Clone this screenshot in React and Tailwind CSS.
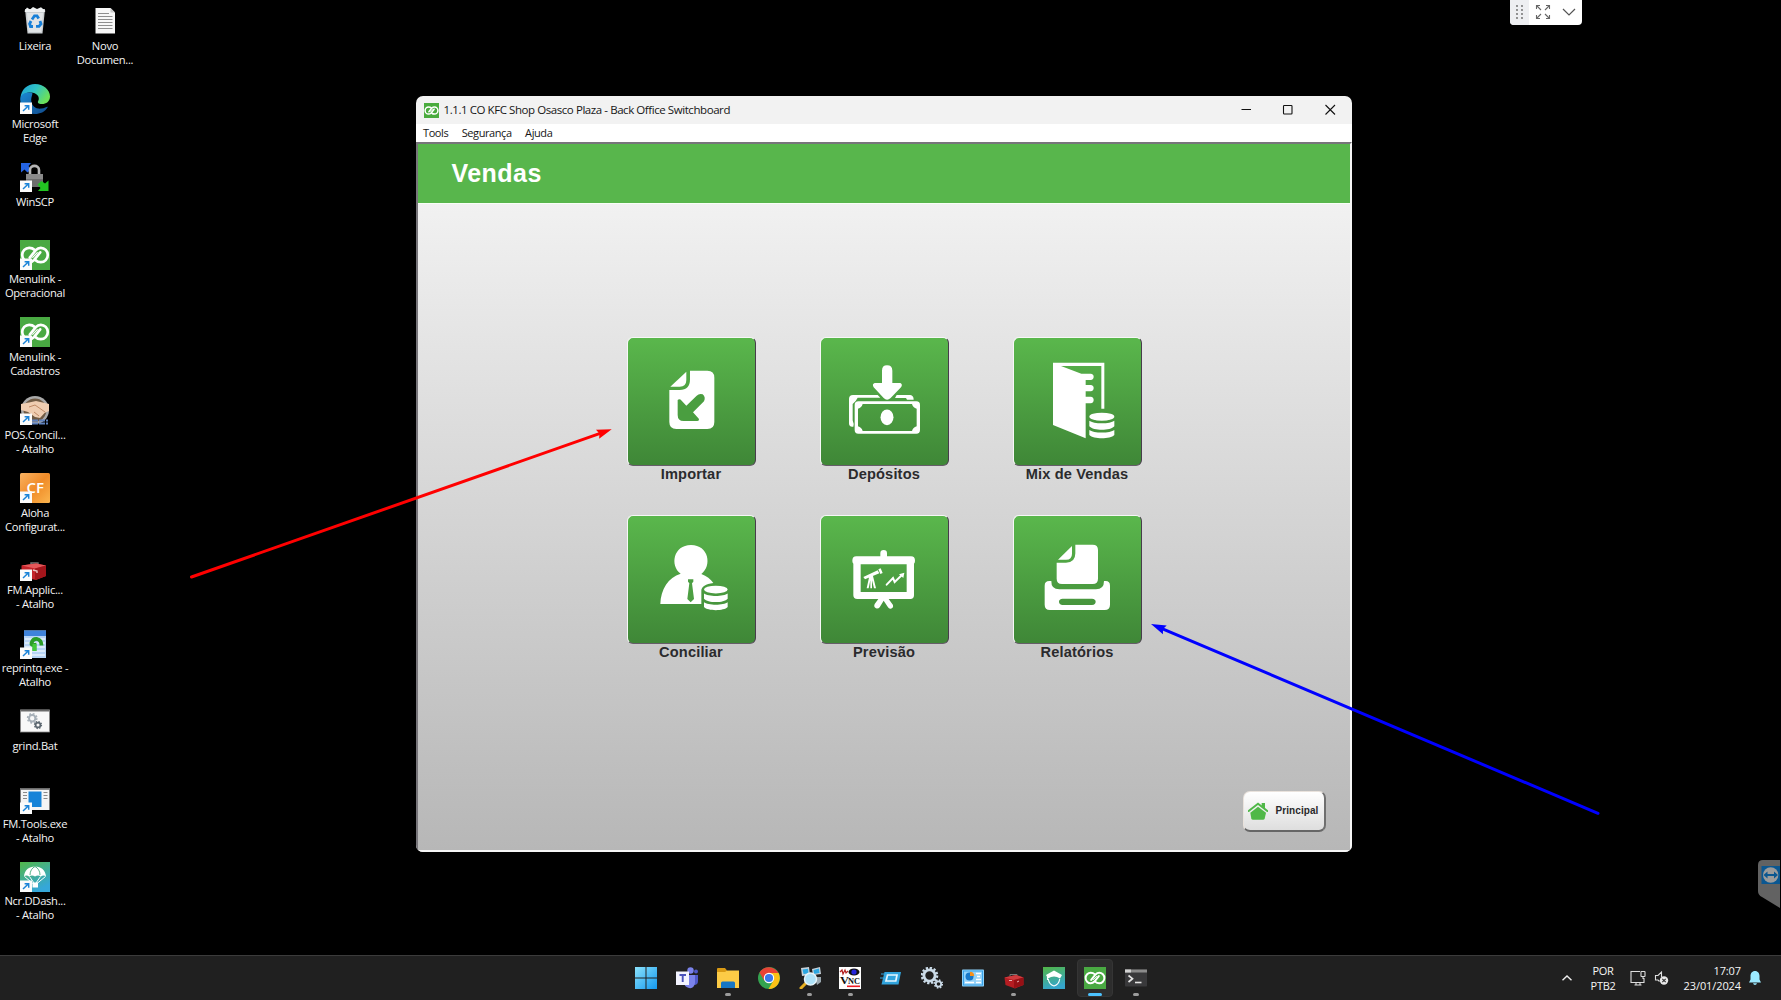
import React from "react";

const Shortcut = () => (
  <g>
    <rect x="0" y="18.500" width="12" height="11.500" fill="#fbfbfb" />
    <path d="M3 27 L8.5 21.8 M4.6 21.8 H8.7 V25.8" fill="none" stroke="#1c84d8" strokeWidth="1.5" />
  </g>
);

const Svg = ({ children, vb = "0 0 30 30", className = "w-[30px] h-[30px]" }) => (
  <svg viewBox={vb} className={className + " block shrink-0"}>{children}</svg>
);

const LinkMark = ({ w = 2.7 }) => (
  <g fill="none" stroke="#fff" strokeWidth={w} strokeLinecap="round">
    <path d="M9.800 17.600 L15.800 10.200 C17.500 8.300 19.200 7.800 20.800 7.800 A7 7.200 0 0 1 20.800 22.200 C18.300 22.200 16.800 21.500 15.600 20.300" />
    <path d="M20.200 12.400 L14.200 19.800 C12.500 21.700 10.800 22.200 9.200 22.200 A7 7.200 0 0 1 9.200 7.800 C11.700 7.800 13.200 8.500 14.400 9.700" />
    <path d="M12.700 17.300 L17.300 12.700" strokeWidth="1.200" />
  </g>
);

const icons = {
  bin: (
    <Svg>
      <path d="M5 3 L25 3 L22.5 27.5 H7.5 Z" fill="#c9cdd0" />
      <path d="M4.5 5 L7 1.5 L10 3.5 L13 1 L17 3 L21 1.3 L25.5 5 L24.5 6 H5Z" fill="#eef0f1" />
      <path d="M7 7 L23 7 L21.3 26 H8.7Z" fill="#e1e4e6" />
      <g fill="none" stroke="#167fd8" strokeWidth="2.8">
        <path d="M12 13.5 L14.5 9.8 H17 L18.7 12.6" /><path d="M20 15 L21 18 L19 20.3 H16" /><path d="M13 20.5 H10.5 L9.6 17.8 L11 15" />
      </g>
    </Svg>
  ),
  doc: (
    <Svg>
      <path d="M5.5 2 H20.5 L25 6.5 V27.5 H5.5Z" fill="#f7f7f7" />
      <path d="M20.5 2 V6.5 H25Z" fill="#c9c9c9" />
      <path d="M8 7.5 H19 M8 10.5 H22.5 M8 13.5 H22.5 M8 16.5 H22.5 M8 19.5 H22.5 M8 22.5 H22.5" stroke="#8e8e8e" strokeWidth="1" />
    </Svg>
  ),
  edge: (
    <Svg>
      <defs>
        <linearGradient id="eg1" x1="0" y1="0" x2="1" y2="0.5"><stop offset="0" stopColor="#1d9fd8" /><stop offset="0.5" stopColor="#2fc3c6" /><stop offset="1" stopColor="#6be05a" /></linearGradient>
        <linearGradient id="eg2" x1="0" y1="0" x2="1" y2="1"><stop offset="0" stopColor="#1b8ad4" /><stop offset="1" stopColor="#114a8b" /></linearGradient>
      </defs>
      <path d="M0.5 14 C1 5.5 7.5 0 15 0 C23.5 0 30 6 30 12.5 C30 17.5 26 20 22 20 C18 20 17.3 18.4 18.2 17 C20.5 13 16.5 8.5 11 8.5 C6 8.5 2 10.5 0.5 14Z" fill="url(#eg1)" />
      <path d="M0.3 14 C1.5 9.5 6 8 11 8.5 C14 9 11.2 11.5 11.2 16 C11.2 22 16.5 25.5 21.5 24.6 C25 24 27.5 22 27.8 23 C25 28 20 30 15 30 C6 30 -0.5 23 0.3 14Z" fill="url(#eg2)" />
      <Shortcut />
    </Svg>
  ),
  winscp: (
    <Svg>
      <path d="M1 1 H11 L8.5 4 L11 7.5 L7.5 10.5 L4.5 7.5 L1 10.5Z" fill="#2363e4" />
      <path d="M10 12 V8 C10 2.5 19 2.5 19 8 V12" fill="none" stroke="#b5b5b5" strokeWidth="2.6" />
      <rect x="6" y="12" width="17" height="13" rx="1.5" fill="#6d6d6d" /><rect x="6" y="12" width="17" height="5" fill="#8a8a8a" />
      <path d="M28.5 29 H18 L20.5 26 L17.5 22.5 L21.5 19 L25 21.5 L28.5 18.5Z" fill="#22c322" />
      <Shortcut />
    </Svg>
  ),
  menulink: (
    <Svg>
      <rect width="30" height="30" fill="#49a942" />
      <LinkMark /><Shortcut />
    </Svg>
  ),
  pos: (
    <Svg>
      <circle cx="15" cy="15" r="14" fill="#a9a9a9" /><circle cx="15" cy="15" r="11.5" fill="#6f5a44" />
      <path d="M1 9 L9 7.5 L16 6 L29 9 V16 L24.5 18 L20 23 L15 22 L8 17 L1 15Z" fill="#efcdb1" />
      <path d="M9 12 L15 10 L25 17 M14 17 L19 21" stroke="#c08a66" strokeWidth="1" fill="none" />
      <path d="M12 25.5 H28 M12 28.5 H28" stroke="#5f82bf" strokeWidth="2.2" strokeDasharray="6 1" />
      <Shortcut />
    </Svg>
  ),
  cf: (
    <Svg>
      <defs><linearGradient id="cfg" x1="0" y1="0" x2="1" y2="1"><stop offset="0" stopColor="#f9b262" /><stop offset="0.5" stopColor="#f08b28" /><stop offset="1" stopColor="#fbb54e" /></linearGradient></defs>
      <rect width="30" height="30" rx="1.5" fill="url(#cfg)" />
      <text x="15.300" y="20" textAnchor="middle" fontFamily="Open Sans, sans-serif" fontSize="15" fontWeight="600" fill="#fff">CF</text>
      <Shortcut />
    </Svg>
  ),
  toolbox: (
    <Svg>
      <path d="M11 14 V12 H18 V14" stroke="#777" strokeWidth="1.4" fill="none" />
      <path d="M1.5 14.5 L16 12.5 L26 14.5 V25 L16 29 L1.5 26Z" fill="#c4242a" />
      <path d="M1.5 14.5 L16 12.5 L26 14.5 L15 17.5Z" fill="#e4585a" /><path d="M15 17.5 V29 L26 25 V14.5Z" fill="#a3151b" />
      <path d="M13 19 L17 20 V22" stroke="#e9c6c6" strokeWidth="1.4" fill="none" />
      <Shortcut />
    </Svg>
  ),
  reprint: (
    <Svg>
      <rect x="4" y="1.5" width="22" height="27.5" fill="#b7d4f6" /><rect x="4" y="1.5" width="22" height="5.5" fill="#3f83da" />
      <path d="M5 10 H25 M5 14 H25 M5 18 H25 M5 22 H25 M5 26 H25" stroke="#e8f2fd" strokeWidth="1.6" />
      <path d="M14.500 22 V16 Q11 16.500 11.500 14 Q13 9.500 17 10 Q21.500 11 21.500 16.500" fill="none" stroke="#2a9d27" strokeWidth="3.800" />
      <path d="M14.500 22 V15" stroke="#43c93a" strokeWidth="4" />
      <Shortcut />
    </Svg>
  ),
  grind: (
    <Svg>
      <rect x="0.5" y="4" width="29" height="22" fill="#f8f8f8" stroke="#8a8a8a" strokeWidth="0.8" /><rect x="0.5" y="3.5" width="29" height="2" fill="#6b6b6b" />
      <circle cx="12.2" cy="12.3" r="3.2" fill="none" stroke="#a7b0b8" strokeWidth="2" /><circle cx="12.2" cy="12.3" r="4.6" fill="none" stroke="#a7b0b8" strokeWidth="1.6" strokeDasharray="1.8 1.81" />
      <circle cx="18" cy="19" r="2.4" fill="none" stroke="#5c6770" strokeWidth="1.7" /><circle cx="18" cy="19" r="3.5" fill="none" stroke="#5c6770" strokeWidth="1.3" strokeDasharray="1.4 1.35" />
    </Svg>
  ),
  fmtools: (
    <Svg>
      <rect x="0.5" y="4" width="29" height="22" fill="#f4f4f4" /><rect x="0.5" y="4" width="29" height="1.8" fill="#6b6b6b" />
      <rect x="8.5" y="7.5" width="13" height="15.5" fill="#1683d8" />
      <path d="M3 8.5 H7 M3 11.5 H7 M3 14.5 H7 M23.5 8.5 H27.5 M23.5 11.5 H27.5 M23.5 14.5 H27.5" stroke="#8a8a8a" strokeWidth="1.1" />
      <Shortcut />
    </Svg>
  ),
  ncr: (
    <Svg>
      <defs><linearGradient id="ncrg" x1="0" y1="0" x2="0.5" y2="1"><stop offset="0" stopColor="#52b748" /><stop offset="1" stopColor="#35a7d9" /></linearGradient></defs>
      <rect width="30" height="30" fill="url(#ncrg)" />
      <path d="M4 14.5 C4.5 8 9 4.5 15 4.5 C21 4.5 25.5 8 26 14.5 C24.5 13.3 22.5 13.3 21 14.6 C19 13.2 17 13.2 15 14.6 C13 13.2 11 13.2 9 14.6 C7.5 13.3 5.5 13.3 4 14.5Z" fill="#fff" />
      <path d="M10 13 C10 9 12 6 15 4.5 C18 6 20 9 20 13" fill="none" stroke="#45ad7c" strokeWidth="0.9" />
      <path d="M4.5 14.5 L13 21.5 M9.5 14.5 L14 21 M20.5 14.5 L16 21 M25.5 14.5 L17 21.5" stroke="#fff" strokeWidth="1" />
      <rect x="12.5" y="20.5" width="5.5" height="5" fill="#fff" />
      <Shortcut />
    </Svg>
  ),
};

const desktop = [
  ["bin", "Lixeira"],
  ["edge", "Microsoft", "Edge"],
  ["winscp", "WinSCP"],
  ["menulink", "Menulink -", "Operacional"],
  ["menulink", "Menulink -", "Cadastros"],
  ["pos", "POS.Concil...", "- Atalho"],
  ["cf", "Aloha", "Configurat..."],
  ["toolbox", "FM.Applic...", "- Atalho"],
  ["reprint", "reprintq.exe -", "Atalho"],
  ["grind", "grind.Bat"],
  ["fmtools", "FM.Tools.exe", "- Atalho"],
  ["ncr", "Ncr.DDash...", "- Atalho"],
];

const DesktopItem = ({ item: [icon, ...lines] }) => (
  <div className="flex h-[77.78px] w-[70px] flex-col items-center pt-[6.4px]">
    {icons[icon]}
    <div className="mt-[2.6px] text-center text-[11.2px] leading-[14px] tracking-[-0.3px] whitespace-nowrap text-[#f4f4f4]">
      {lines.map((l) => <div key={l}>{l}</div>)}
    </div>
  </div>
);

const Coins = ({ x, y, w, h }) => (
  <g transform={`translate(${x} ${y}) scale(${w / 74} ${h / 76})`} fill="#fff">
    <ellipse cx="37" cy="12" rx="37" ry="12" />
    <path d="M0 24 C12 34 62 34 74 24 V40 C62 54 12 54 0 40Z" />
    <path d="M0 51 C12 61 62 61 74 51 V66 C62 79 12 79 0 66Z" />
  </g>
);

const tiles = [
  {
    label: "Importar", vb: "53 36 384 384",
    art: (
      <>
        <path d="M239 137 H291 Q312 137 312 158 V291 Q312 312 291 312 H198 Q177 312 177 291 V195 H208 Q239 195 239 163Z" fill="#fff" />
        <path d="M180 185 L228 140 V165 Q228 185 208 185Z" fill="#fff" />
        <path d="M202 225 Q208 220 214 227 L228 242 L259 212 Q267 204 277 208 Q287 217 281 229 L248 262 L266 282 Q267 288 261 288 H220 Q202 288 202 270Z" fill="#4a9e40" />
      </>
    ),
  },
  {
    label: "Depósitos", vb: "632 36 384 384",
    art: (
      <>
        <path d="M815 137 Q815 121 830 121 Q846 121 846 137 V174 H870 Q878 178 872 187 L841 219 Q830 229 820 219 L790 187 Q784 177 793 174 H815Z" fill="#fff" />
        <path d="M716 222 Q716 210 728 210 H802 L810 218 H742 L736 228 L727 237 V286 Q732 298 729 305 Q716 307 716 295Z M859 210 H900 Q910 212 910 224 H890 L887 219 H854Z" fill="#fff" />
        <path fillRule="evenodd" d="M744 229 H918 Q929 229 929 240 V315 Q929 326 918 326 H744 Q733 326 733 315 V240 Q733 229 744 229Z M757 237 Q754 248 743 251 V304 Q754 307 757 318 H905 Q908 307 919 304 V251 Q908 248 905 237Z" fill="#fff" />
        <ellipse cx="830" cy="277" rx="19.5" ry="23.5" fill="#fff" />
      </>
    ),
  },
  {
    label: "Mix de Vendas", vb: "161 36 384 384",
    art: (
      <>
        <path d="M278 113 H432 V251 H423 V123 H302 L363 146 H391 Q400 147 400 155 Q400 164 391 165 H376 V180 H391 Q400 181 400 189 Q400 198 391 199 H376 V215 H391 Q400 216 400 225 Q400 234 391 235 H376 V340 L278 300Z" fill="#fff" />
        <Coins x={387} y={263} w={75} h={77} />
      </>
    ),
  },
  {
    label: "Conciliar", vb: "53 45 384 384",
    art: (
      <>
        <path d="M211 221 C178 197 189 135 242 135 C295 135 306 197 273 222 C289 228 301 237 309 249 C286 252 273 260 273 272 V312 H150 C151 268 174 232 211 221Z" fill="#fff" />
        <path d="M233 238 H249 V245 L245 250 L251 297 L241 307 L231 297 L237 250 L233 245Z" fill="#4c9f42" />
        <Coins x={281} y={257} w={71} h={74} />
      </>
    ),
  },
  {
    label: "Previsão", vb: "632 45 384 384",
    art: (
      <>
        <path fillRule="evenodd" d="M810 169 V160 Q810 150 820 150 Q830 150 830 160 V169 H902 Q914 169 914 182 Q914 188 911 191 V286 Q911 297 900 297 H835 L848 315 Q850 325 841 326 Q836 327 833 322 L820 302 L808 322 Q804 327 797 325 Q789 321 793 312 L804 297 H741 Q729 297 729 286 V191 Q726 188 726 182 Q726 169 738 169Z M751 193 V276 H889 V193Z" fill="#fff" />
        <path d="M759 231 L802 211 L807 220 L764 238Z M804 208 L811 205 L817 219 L810 222Z M777 228 H788 L797 265 H791 L785 241 V265 H780 V241 L775 265 H769Z" fill="#fff" />
        <path d="M829 254 L848 234 L853 246 L874 226" fill="none" stroke="#fff" strokeWidth="6" strokeLinecap="round" /><path d="M866 223 L882 218 L879 234Z" fill="#fff" />
      </>
    ),
  },
  {
    label: "Relatórios", vb: "161 45 384 384",
    art: (
      <>
        <path d="M345 134 H397 Q413 134 413 150 V236 Q413 252 397 252 H305 Q289 252 289 236 V188 H317 Q345 188 345 160Z M293 179 L335 138 V161 Q335 179 317 179Z" fill="#fff" />
        <path fillRule="evenodd" d="M253 257 Q253 243 267 243 H273 Q272 268 297 268 H407 Q431 268 431 243 H436 Q449 243 449 257 V314 Q449 330 433 330 H269 Q253 330 253 314Z M307 296 Q296 297 296 305 Q296 314 307 315 H395 Q406 314 406 305 Q406 297 395 296Z" fill="#fff" />
      </>
    ),
  },
];

const Tile = ({ t }) => (
  <div className="flex h-[178px] w-32 flex-col items-center">
    <div className="h-[129px] w-[129px] shrink-0 rounded-[6px] border-t border-l border-r border-b border-t-[#f7f7f7] border-l-[#f7f7f7] border-r-[#473d4b] border-b-[#655d68] bg-linear-to-b from-[#5ab74c] to-[#3f8737]">
      <svg viewBox={t.vb} className="-mt-px block h-32 w-32">{t.art}</svg>
    </div>
    <div className="text-[14.6px] leading-[16px] font-bold tracking-[0.16px] whitespace-nowrap text-[#2b2b2d]">{t.label}</div>
  </div>
);

const Window = () => (
  <div className="absolute top-[96px] left-[416px] flex h-[755.5px] w-[935.5px] flex-col overflow-hidden rounded-[7px] bg-[#f2f2f2] font-['Open_Sans','Noto_Sans',sans-serif]">
    <div className="flex h-[28px] shrink-0 items-center pl-[7.5px]">
      <svg viewBox="0 0 30 30" className="h-[15px] w-[15px]"><rect width="30" height="30" fill="#49ab3d" /><LinkMark w={3} /></svg>
      <span className="ml-[5px] text-[11.5px] tracking-[-0.43px] whitespace-nowrap text-[#161616]">1.1.1 CO KFC Shop Osasco Plaza - Back Office Switchboard</span>
      <svg viewBox="0 0 100 14" className="mr-[14.500px] ml-auto h-[14px] w-[100px]" fill="none" stroke="#111" strokeWidth="1.1">
        <path d="M4.500 6.500 H14 M88.500 2 L98 11.500 M98 2 L88.500 11.500" /><rect x="46.500" y="2.500" width="8.500" height="8.500" rx="0.700" />
      </svg>
    </div>
    <div className="flex h-[18px] shrink-0 items-center gap-[13.5px] bg-white pl-[7px] text-[11px] tracking-[-0.42px] text-[#161616]">
      <span>Tools</span><span>Segurança</span><span>Ajuda</span>
    </div>
    <div className="flex min-h-0 flex-1 flex-col border-t-2 border-r-2 border-b-2 border-l-2 border-t-[#77757a] border-r-[#f6f6f6] border-b-[#f6f6f6] border-l-[#77757a] font-['Liberation_Sans',sans-serif]">
      <div className="flex h-[60px] shrink-0 items-center border-b border-[#f8fff6] bg-[#58b64c] pl-[33.500px] text-[25px] font-bold tracking-[0.450px] text-white">
        <span>Vendas</span>
      </div>
      <div className="flex min-h-0 flex-1 flex-col justify-between bg-linear-to-b from-[#f1f1f1] to-[#b7b7b7] pt-[133px] pr-[24px] pb-[18px] pl-[209px]">
        <div className="grid grid-cols-[128px_128px_128px] gap-x-[65px]">
          {tiles.map((t) => <Tile key={t.label} t={t} />)}
        </div>
        <button className="flex h-[41px] w-[83px] items-center self-end rounded-[7px] border-t border-l border-r-2 border-b-2 border-t-[#e9e2dc] border-l-[#e9e2dc] border-r-[#6f6f6f] border-b-[#666] bg-linear-to-b from-white to-[#dedede] pl-[4px]">
          <svg viewBox="0 0 60 54" className="h-[18px] w-5 shrink-0">
            <path d="M2 27 L30 5 L58 27" fill="none" stroke="#50b848" strokeWidth="6" strokeLinecap="round" /><path d="M41 3 H51 V20 L41 12Z" fill="#50b848" />
            <path d="M7 32 L30 14 L54 32 L50 50 Q49 53 45 53 H15 Q11 53 10 50Z" fill="#50b848" />
          </svg>
          <span className="ml-[8px] text-[10px] font-bold tracking-[0.080px] text-[#29292b]">Principal</span>
        </button>
      </div>
    </div>
  </div>
);

const B = ({ children }) => <Svg vb="0 0 22 22" className="w-[22px] h-[22px]">{children}</Svg>;

const tasks = [
  { id: "start", art: <B><defs><linearGradient id="wg" x1="0" y1="0" x2="1" y2="1"><stop offset="0" stopColor="#8be2fc" /><stop offset="1" stopColor="#1398ee" /></linearGradient></defs><path d="M0 0 H10.500 V10.500 H0Z M11.500 0 H22 V10.500 H11.500Z M0 11.500 H10.500 V22 H0Z M11.500 11.500 H22 V22 H11.500Z" fill="url(#wg)" /></B> },
  { id: "teams", art: <B><circle cx="14.500" cy="3.500" r="3.200" fill="#7b83eb" /><circle cx="20" cy="4.500" r="2" fill="#5059c9" /><path d="M16 8 H22 V14 Q22 18 18 18Z" fill="#5059c9" /><path d="M8 8 H19 V16 Q18 22 13 21 Q8.500 20 8 16Z" fill="#7b83eb" /><rect x="0" y="4.500" width="13" height="13.500" fill="#f3f4ff" /><path d="M3.500 8 H10 M6.700 8 V15" stroke="#4b53bc" strokeWidth="1.900" /></B> },
  { id: "files", dot: true, art: <B><path d="M0 2 Q0 1 1 1 H8 L10 3.500 V6 H0Z" fill="#d99a14" /><path d="M0 5 H8 L10 3.500 H22 V21 H0Z" fill="#fccb46" /><path d="M4 21 V16 Q4 14.500 5.500 14.500 H16.500 Q18 14.500 18 16 V21Z" fill="#1676c4" /></B> },
  { id: "chrome", art: <B><circle cx="11" cy="11" r="11" fill="#34a350" /><path d="M11 11 L11 6 L20.600 6 A11 11 0 0 1 10.500 22 L15.500 13.500Z" fill="#fbc116" /><path d="M11 6 H20.500 A11 11 0 0 0 1.500 5.500 L6.500 14Z" fill="#e84235" /><circle cx="11" cy="11" r="5.200" fill="#fff" /><circle cx="11" cy="11" r="4.100" fill="#3b79ec" /></B> },
  { id: "search", dot: true, art: <B><path d="M2 1 L10 0 L11 8 L3 9Z M13 2 L21 0 L22 7 L14 8Z" fill="#c7d2da" /><path d="M3.500 2.500 L9 1.800 L9.500 6.500 L4.500 7Z M14.500 3 L20 1.500 L20.500 6 L15 7Z" fill="#2ba7e2" /><path d="M16 10 H22 V15 L18 18Z" fill="#9aa8b0" /><path d="M2 21 L8 15" stroke="#e6af22" strokeWidth="3" strokeLinecap="round" /><circle cx="11.500" cy="12" r="6" fill="#aee2f8" stroke="#e6f4fa" strokeWidth="1.500" /></B> },
  { id: "vnc", dot: true, art: <B><rect width="22" height="22" fill="#fff" /><path d="M1 5 L3 3 L4 7 L6 3 L7 6 L9 4" stroke="#b32121" fill="none" strokeWidth="1.200" /><ellipse cx="15" cy="5" rx="5.500" ry="3.500" fill="#111" /><circle cx="15" cy="5" r="2.600" fill="#2525dc" /><text x="1" y="17" fontFamily="Liberation Serif, serif" fontWeight="bold" fontSize="11" fill="#111" textLength="9" lengthAdjust="spacingAndGlyphs">V</text><text x="9" y="16.500" fontFamily="Liberation Serif, serif" fontWeight="bold" fontSize="8" fill="#111" textLength="12" lengthAdjust="spacingAndGlyphs">NC</text><path d="M8 19.300 H21" stroke="#ed1c24" strokeWidth="1.600" /></B> },
  { id: "run", art: <B><path d="M4.500 5 H21 L18.500 17.500 H1.500Z" fill="#31a4dd" /><path d="M1 7 H4 M0 11 H3" stroke="#31a4dd" strokeWidth="1.200" /><path d="M7.500 8 H17 L15.800 14 H6Z" fill="#31a4dd" stroke="#e5f6ff" strokeWidth="1.700" /></B> },
  { id: "gears", art: <B><g fill="none" stroke="#cbdbe8"><circle cx="8.500" cy="8.500" r="5.600" strokeWidth="2.800" /><circle cx="8.500" cy="8.500" r="7.700" strokeWidth="2.200" strokeDasharray="2.300 1.730" /><circle cx="17.500" cy="17" r="2.700" strokeWidth="1.800" /><circle cx="17.500" cy="17" r="3.900" strokeWidth="1.600" strokeDasharray="1.600 1.460" /></g></B> },
  { id: "panel", art: <B><rect x="0" y="2.500" width="22" height="17" rx="0.800" fill="#8dd2fa" /><rect x="1" y="3.500" width="20" height="15" fill="#39a1e8" /><rect x="2" y="4.500" width="18" height="13" fill="#93d3fa" /><circle cx="7.500" cy="9.500" r="4" fill="#1878c8" /><path d="M8 9 V4.700 A4.300 4.300 0 0 1 12.200 9Z" fill="#f6921e" /><path d="M14 6.500 H19 M15 9.500 H18 M14 12.500 H19 M3 15.500 H12 M14 15.500 H19" stroke="#fff" strokeWidth="1.500" /></B> },
  { id: "box", dot: true, art: <B><path d="M7 9.500 V7.500 H14 V9.500" stroke="#777" fill="none" /><path d="M1.500 10.500 L13 8 L20.500 10.500 V18 L12 21.500 L2.500 18Z" fill="#b51d22" /><path d="M1.500 10.500 L13 8 L20.500 10.500 L11 13Z" fill="#cf3b3e" /><path d="M11 13 V21.200 L20.500 18 V10.500Z" fill="#961015" /><path d="M6 13.500 H9 M14 15 L16 14" stroke="#e6b5b5" /></B> },
  { id: "cap", art: <B><defs><linearGradient id="cpg" x1="0" y1="0" x2="0.3" y2="1"><stop offset="0" stopColor="#52b645" /><stop offset="1" stopColor="#35a6cc" /></linearGradient></defs><rect width="22" height="22" fill="url(#cpg)" /><path d="M3 8 L11 3.500 L19 8 L17 11.500 Q11 7.500 5 11.500Z" fill="#fff" /><path d="M4.500 8 V13 M5.300 12 Q6 17.500 11 19 Q16 17.500 16.700 12" fill="none" stroke="#fff" strokeWidth="1.100" /></B> },
  { id: "link", active: true, art: <Svg className="w-[22px] h-[22px]"><rect width="30" height="30" fill="#49a942" /><LinkMark /></Svg> },
  { id: "term", dot: true, art: <B><rect x="0" y="2.500" width="22" height="17" rx="0.800" fill="#39393b" /><rect x="0" y="2.500" width="22" height="3" fill="#8b8b8b" /><path d="M0 2.500 H6 V5.500 H0Z" fill="#d1d1d1" /><path d="M3.500 8.500 L7.500 11.700 L3.500 15" fill="none" stroke="#e5e5e5" strokeWidth="1.700" /><path d="M10 15.500 H16.500" stroke="#e5e5e5" strokeWidth="1.600" /></B> },
];

const Taskbar = () => (
  <div className="flex h-[45px] shrink-0 border-t border-[#3b3b3b] bg-[#202020] font-['Open_Sans','Noto_Sans',sans-serif]">
    <div className="flex pl-[625.8px]">
      {tasks.map((t) => (
        <div key={t.id} className="flex w-[40.83px] justify-center pt-[3px]">
          <div className={"flex h-[38px] w-[36px] flex-col items-center rounded-[4px] " + (t.active ? "border border-[#353535] bg-[#2d2d2d] pt-[7px]" : "pt-[8px]")}>
            {t.art}
            {t.dot && <div className="mt-[4px] h-[3px] w-[5.5px] shrink-0 rounded-full bg-[#9c9c9c]" />}
            {t.active && <div className="mt-[4px] h-[3px] w-[14px] shrink-0 rounded-full bg-[#4cc2ff]" />}
          </div>
        </div>
      ))}
    </div>
    <div className="ml-auto flex items-center pr-[19px] text-[11px] leading-[15px] text-[#f5f5f5]">
      <svg viewBox="0 0 12 8" className="h-2 w-3" fill="none" stroke="#eee" strokeWidth="1.400"><path d="M1.500 6.300 L6 2 L10.500 6.300" /></svg>
      <div className="ml-[17.500px] w-[25px] text-center tracking-[-0.3px] whitespace-nowrap"><div>POR</div><div>PTB2</div></div>
      <svg viewBox="0 0 16 16" className="ml-[14.500px] h-4 w-4" fill="none" stroke="#ddd" strokeWidth="1.100"><path d="M10 1.500 H1 V12.500 H14 V8 M4.500 15 H11.500 M6 12.500 V15 M10 12.500 V15 M13 6.500 V9" /><rect x="11" y="1.500" width="4" height="5" rx="0.500" /></svg>
      <svg viewBox="0 0 16 16" className="ml-[8px] h-4 w-4" fill="none" stroke="#ddd" strokeWidth="1.100"><path d="M7.500 7 V2 L4 5.500 H1.500 V10 H4 L5.500 11.500" /><circle cx="10" cy="10.500" r="4.200" fill="#e8e8e8" stroke="none" /><path d="M8.300 8.800 L11.700 12.200 M11.700 8.800 L8.300 12.200" stroke="#333" /></svg>
      <div className="ml-[13px] w-[58px] text-right tracking-[-0.1px] whitespace-nowrap"><div>17:07</div><div>23/01/2024</div></div>
      <svg viewBox="0 0 14 16" className="ml-[7px] h-4 w-[14px]"><path d="M7 1 C10 1 11.500 3.500 11.500 6 V9.500 L13 12.500 H1 L2.500 9.500 V6 C2.500 3.500 4 1 7 1Z M5 13.200 H9 Q8.500 15 7 15 Q5.500 15 5 13.200Z" fill="#9ceaff" /></svg>
    </div>
  </div>
);

const Arrow = ({ x1, y1, x2, y2, color }) => {
  const a = (Math.atan2(y2 - y1, x2 - x1) * 180) / Math.PI;
  const len = Math.hypot(x2 - x1, y2 - y1);
  return (
    <g transform={`translate(${x2} ${y2}) rotate(${a})`} fill={color}>
      <path d={`M${-len} 0 H-10`} stroke={color} strokeWidth="3" strokeLinecap="round" />
      <path d="M0 0 L-15 -4.800 L-13 0 L-15 4.800Z" />
    </g>
  );
};

export default function App() {
  return (
    <div className="relative flex h-[1000px] w-[1781px] flex-col overflow-hidden bg-black">
      <div className="flex min-h-0 flex-1 font-['Open_Sans','Noto_Sans',sans-serif]">
        <div className="flex flex-col">{desktop.map((d, i) => <DesktopItem key={i} item={d} />)}</div>
        <DesktopItem item={["doc", "Novo", "Documen..."]} />
      </div>
      <Taskbar />
      <Window />
      <div className="absolute top-0 left-[1510px] flex h-[25px] w-[72px] items-center overflow-hidden rounded-b-[4px] bg-white">
        <div className="-mt-[2px] flex h-[27px] w-[19px] items-center justify-center bg-[#eeeff2]">
          <svg viewBox="0 0 10 16" className="h-4 w-[10px]" fill="#666"><circle cx="2" cy="2" r="0.900" /><circle cx="7" cy="2" r="0.900" /><circle cx="2" cy="6" r="0.900" /><circle cx="7" cy="6" r="0.900" /><circle cx="2" cy="10" r="0.900" /><circle cx="7" cy="10" r="0.900" /><circle cx="2" cy="14" r="0.900" /><circle cx="7" cy="14" r="0.900" /></svg>
        </div>
        <svg viewBox="0 0 16 16" className="-mt-px ml-[6px] h-4 w-4" fill="none" stroke="#666" strokeWidth="1.100"><path d="M1.500 5 V1.500 H5 M1.500 1.500 L6 6 M11 1.500 H14.500 V5 M14.500 1.500 L10 6 M1.500 11 V14.500 H5 M1.500 14.500 L6 10 M11 14.500 H14.500 V11 M14.500 14.500 L10 10" /></svg>
        <svg viewBox="0 0 14 8" className="-mt-px ml-[11px] h-2 w-[14px]" fill="none" stroke="#555" strokeWidth="1.200"><path d="M1 1 L7 7 L13 1" /></svg>
      </div>
      <svg viewBox="0 0 23 50" className="absolute top-[859px] left-[1758px] h-[50px] w-[23px]">
        <path d="M0 6 Q0 1 5 1 H22 V49 L4 38 Q0 36 0 32Z" fill="#626262" />
        <rect x="3.500" y="7" width="18.500" height="18" fill="#0b5791" /><circle cx="12.700" cy="16" r="7.700" fill="#9b9b9b" />
        <path d="M5.500 16 L9.500 12.500 V15 H16 V12.500 L20 16 L16 19.500 V17 H9.500 V19.500Z" fill="#0b5791" />
      </svg>
      <svg viewBox="0 0 1781 1000" className="pointer-events-none absolute inset-0 h-full w-full">
        <Arrow x1={191.5} y1={577} x2={611.7} y2={429.3} color="#ff0000" />
        <Arrow x1={1598} y1={813.3} x2={1151} y2={624} color="#0000ff" />
      </svg>
    </div>
  );
}
